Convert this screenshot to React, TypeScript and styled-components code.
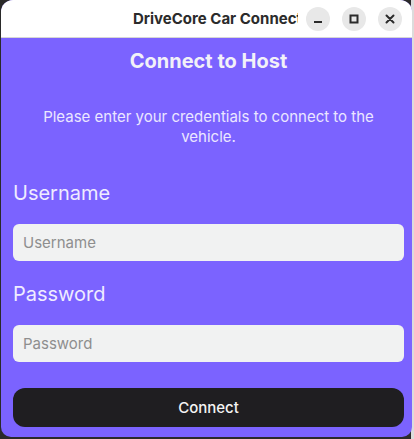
import React from "react";
import styled, { createGlobalStyle } from "styled-components";

const Global = createGlobalStyle`
  html, body { margin: 0; padding: 0; }
  body {
    width: 414px;
    height: 439px;
    overflow: hidden;
    background: linear-gradient(to right, #2a2a2a 0, #2a2a2a 411px, #dcdcdc 411px);
    font-family: Inter, "Noto Sans", sans-serif;
  }
`;

const Window = styled.div`
  margin-left: 1px;
  width: 411px;
  height: 437px;
  border-radius: 12px 12px 10px 10px;
  overflow: hidden;
  display: flex;
  flex-direction: column;
  background: #7b63ff;
`;

const HeaderBar = styled.div`
  height: 38px;
  flex: none;
  background: #ffffff;
  border-bottom: 1px solid #d6d6d6;
  display: flex;
  align-items: center;
  padding-left: 132px;
  padding-right: 10px;
  box-sizing: border-box;
`;

const Title = styled.div`
  width: 165px;
  overflow: hidden;
  white-space: nowrap;
  font-weight: 700;
  font-size: 15px;
  color: #2b2b2b;
`;

const Controls = styled.div`
  margin-left: auto;
  display: flex;
  gap: 12px;
`;

const CircleBtn = styled.div`
  width: 24px;
  height: 24px;
  border-radius: 50%;
  background: #e8e8e8;
  display: flex;
  align-items: center;
  justify-content: center;
`;

const Content = styled.div`
  flex: 1;
  display: flex;
  flex-direction: column;
  padding: 0 8px 0 12px;
`;

const Heading = styled.h1`
  margin: 11px 0 0;
  text-align: center;
  font-size: 20px;
  font-weight: 700;
  color: #f2f1f8;
  line-height: 24px;
`;

const Subtitle = styled.p`
  margin: 34px 0 0;
  padding: 0 18px;
  text-align: center;
  font-size: 15px;
  line-height: 20px;
  color: #ebe7ff;
`;

const Label = styled.label<{ $top: number }>`
  display: block;
  margin-top: ${(p) => p.$top}px;
  font-size: 20px;
  line-height: 24px;
  color: #efecff;
`;

const Input = styled.input`
  margin-top: 19px;
  height: 37px;
  box-sizing: border-box;
  border: none;
  border-radius: 6px;
  background: #f1f2f2;
  padding: 0 10px;
  font-family: Inter, "Noto Sans", sans-serif;
  font-size: 15px;
  color: #333;
  outline: none;
  &::placeholder { color: #8e8e8e; }
`;

const ConnectButton = styled.button`
  margin-top: 26px;
  height: 39px;
  border: none;
  border-radius: 12px;
  background: #1f1e21;
  color: #f4f4f4;
  font-family: Inter, "Noto Sans", sans-serif;
  font-size: 15px;
  font-weight: 500;
`;

export default function App() {
  return (
    <>
      <Global />
      <Window>
        <HeaderBar>
          <Title>DriveCore Car Connect</Title>
          <Controls>
            <CircleBtn>
              <svg width="10" height="10" viewBox="0 0 10 10">
                <rect x="1" y="7" width="8" height="2" fill="#2b2b2b" />
              </svg>
            </CircleBtn>
            <CircleBtn>
              <svg width="10" height="10" viewBox="0 0 10 10">
                <rect x="1.5" y="1.5" width="7" height="7" fill="none" stroke="#2b2b2b" strokeWidth="2" />
              </svg>
            </CircleBtn>
            <CircleBtn>
              <svg width="10" height="10" viewBox="0 0 10 10">
                <path d="M1.5 1.5 L8.5 8.5 M8.5 1.5 L1.5 8.5" stroke="#2b2b2b" strokeWidth="2" strokeLinecap="round" />
              </svg>
            </CircleBtn>
          </Controls>
        </HeaderBar>
        <Content>
          <Heading>Connect to Host</Heading>
          <Subtitle>Please enter your credentials to connect to the vehicle.</Subtitle>
          <Label $top={34}>Username</Label>
          <Input placeholder="Username" />
          <Label $top={21}>Password</Label>
          <Input type="password" placeholder="Password" />
          <ConnectButton>Connect</ConnectButton>
        </Content>
      </Window>
    </>
  );
}
